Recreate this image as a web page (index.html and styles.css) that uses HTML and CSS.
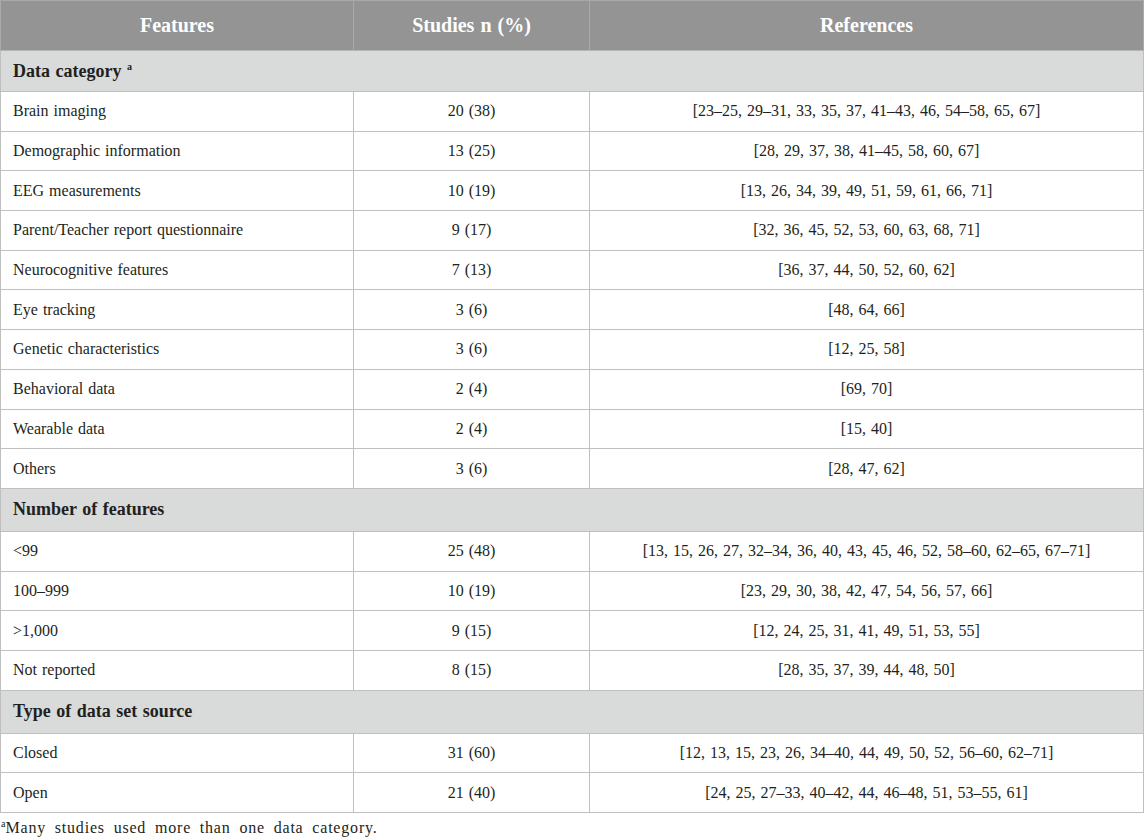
FILE: index.html
```html
<!DOCTYPE html>
<html>
<head>
<meta charset="utf-8">
<link rel="stylesheet" href="styles.css">
</head>
<body>
<div class="wrap">
<table class="tbl">
  <colgroup>
    <col class="c1"><col class="c2"><col class="c3">
  </colgroup>
  <thead>
    <tr class="head"><th>Features</th><th>Studies n (%)</th><th>References</th></tr>
  </thead>
  <tbody>
    <tr class="sec s1"><td colspan="3">Data category <sup>a</sup></td></tr>
    <tr><td>Brain imaging</td><td>20 (38)</td><td>[23–25, 29–31, 33, 35, 37, 41–43, 46, 54–58, 65, 67]</td></tr>
    <tr><td>Demographic information</td><td>13 (25)</td><td>[28, 29, 37, 38, 41–45, 58, 60, 67]</td></tr>
    <tr><td>EEG measurements</td><td>10 (19)</td><td>[13, 26, 34, 39, 49, 51, 59, 61, 66, 71]</td></tr>
    <tr><td>Parent/Teacher report questionnaire</td><td>9 (17)</td><td>[32, 36, 45, 52, 53, 60, 63, 68, 71]</td></tr>
    <tr><td>Neurocognitive features</td><td>7 (13)</td><td>[36, 37, 44, 50, 52, 60, 62]</td></tr>
    <tr><td>Eye tracking</td><td>3 (6)</td><td>[48, 64, 66]</td></tr>
    <tr><td>Genetic characteristics</td><td>3 (6)</td><td>[12, 25, 58]</td></tr>
    <tr><td>Behavioral data</td><td>2 (4)</td><td>[69, 70]</td></tr>
    <tr><td>Wearable data</td><td>2 (4)</td><td>[15, 40]</td></tr>
    <tr><td>Others</td><td>3 (6)</td><td>[28, 47, 62]</td></tr>
    <tr class="sec"><td colspan="3">Number of features</td></tr>
    <tr><td>&lt;99</td><td>25 (48)</td><td>[13, 15, 26, 27, 32–34, 36, 40, 43, 45, 46, 52, 58–60, 62–65, 67–71]</td></tr>
    <tr><td>100–999</td><td>10 (19)</td><td>[23, 29, 30, 38, 42, 47, 54, 56, 57, 66]</td></tr>
    <tr><td>&gt;1,000</td><td>9 (15)</td><td>[12, 24, 25, 31, 41, 49, 51, 53, 55]</td></tr>
    <tr><td>Not reported</td><td>8 (15)</td><td>[28, 35, 37, 39, 44, 48, 50]</td></tr>
    <tr class="sec"><td colspan="3">Type of data set source</td></tr>
    <tr><td>Closed</td><td>31 (60)</td><td>[12, 13, 15, 23, 26, 34–40, 44, 49, 50, 52, 56–60, 62–71]</td></tr>
    <tr><td>Open</td><td>21 (40)</td><td>[24, 25, 27–33, 40–42, 44, 46–48, 51, 53–55, 61]</td></tr>
  </tbody>
</table>
<p class="note"><sup>a</sup>Many studies used more than one data category.</p>
</div>
</body>
</html>
```

FILE: styles.css
```css
html, body {
  margin: 0;
  padding: 0;
  background: #ffffff;
}
body {
  font-family: "Liberation Serif", "Times New Roman", serif;
  color: #231f20;
}
.wrap {
  width: 1145px;
}
.tbl {
  width: 1144px;
  border-collapse: collapse;
  table-layout: fixed;
}
.c1 { width: 353px; }
.c2 { width: 236px; }
.c3 { width: auto; }
.tbl th, .tbl td {
  border: 1px solid #bfbfbf;
  padding: 0 0 0 12px;
  font-size: 16px;
  word-spacing: 1px;
}
.tbl td:nth-child(2), .tbl td:nth-child(3) {
  text-align: center;
  padding: 0;
}
.head th {
  height: 49px;
  background: #949494;
  color: #ffffff;
  font-size: 20px;
  font-weight: bold;
  text-align: center;
  padding: 0;
  border-color: #a9a9a9;
  border-bottom-color: #b5b5b5;
}
.tbl tbody tr {
  height: 39.7px;
}
.tbl tbody tr.sec {
  height: 43px;
}
.tbl tbody tr.sec.s1 {
  height: 41px;
}
.sec td {
  background: #d9dbda;
  font-weight: bold;
  font-size: 18px;
  text-align: left !important;
  padding-left: 12px !important;
}
.sec sup {
  font-size: 10px;
  vertical-align: 7px;
  line-height: 0;
}
.note {
  margin: 6px 0 0 1px;
  font-size: 16px;
  letter-spacing: 0.8px;
  word-spacing: 4px;
  line-height: 18px;
}
.note sup {
  font-size: 10px;
  vertical-align: 6px;
  line-height: 0;
  letter-spacing: 0;
}
```
